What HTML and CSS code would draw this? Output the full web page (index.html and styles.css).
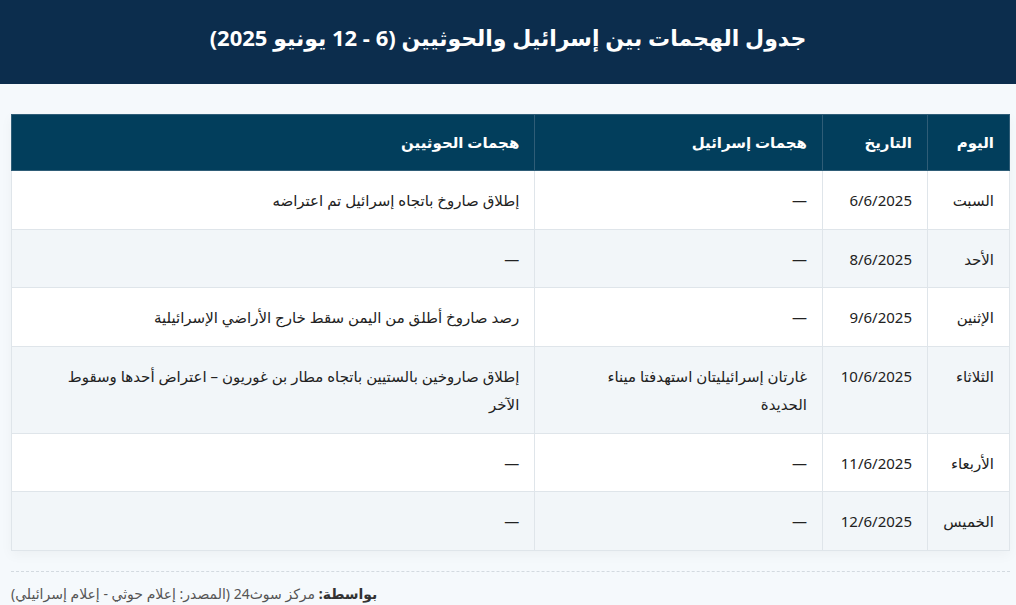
FILE: index.html
```html
<!DOCTYPE html>
<html lang="ar" dir="rtl">
<head>
<meta charset="utf-8">
<link rel="stylesheet" href="styles.css">
</head>
<body>
<header class="top">
  <h1 class="title">جدول الهجمات بين إسرائيل والحوثيين (6 - 12 يونيو 2025)</h1>
</header>
<main class="content">
  <table class="attacks">
    <colgroup>
      <col class="c-day"><col class="c-date"><col class="c-isr"><col class="c-hou">
    </colgroup>
    <thead>
      <tr><th>اليوم</th><th>التاريخ</th><th>هجمات إسرائيل</th><th>هجمات الحوثيين</th></tr>
    </thead>
    <tbody>
      <tr><td>السبت</td><td>6/6/2025</td><td>—</td><td>إطلاق صاروخ باتجاه إسرائيل تم اعتراضه</td></tr>
      <tr><td>الأحد</td><td>8/6/2025</td><td>—</td><td>—</td></tr>
      <tr><td>الإثنين</td><td>9/6/2025</td><td>—</td><td>رصد صاروخ أطلق من اليمن سقط خارج الأراضي الإسرائيلية</td></tr>
      <tr><td>الثلاثاء</td><td>10/6/2025</td><td>غارتان إسرائيليتان استهدفتا ميناء<br>الحديدة</td><td>إطلاق صاروخين بالستيين باتجاه مطار بن غوريون – اعتراض أحدها وسقوط<br>الآخر</td></tr>
      <tr><td>الأربعاء</td><td>11/6/2025</td><td>—</td><td>—</td></tr>
      <tr><td>الخميس</td><td>12/6/2025</td><td>—</td><td>—</td></tr>
    </tbody>
  </table>
  <div class="divider"></div>
  <p class="source"><strong>بواسطة:</strong> مركز سوث24 (المصدر: إعلام حوثي - إعلام إسرائيلي)</p>
</main>
</body>
</html>
```
FILE: styles.css
```css
* { box-sizing: border-box; }
html, body { margin: 0; padding: 0; }
body {
  background: #f5f9fc;
  font-family: "Noto Sans", "DejaVu Sans", sans-serif;
  color: #222;
}
.top {
  background: #0c2d4d;
  height: 84px;
  display: flex;
  justify-content: center;
  padding-top: 21px;
}
.title {
  margin: 0;
  color: #fff;
  font-size: 22px;
  line-height: 32px;
  font-weight: 700;
}
.content {
  padding: 30px 6px 0 11px;
}
.attacks {
  width: 999px;
  border-collapse: collapse;
  background: #fff;
  box-shadow: 0 4px 12px rgba(0,0,0,0.04);
  font-size: 15px;
}
.c-day { width: 82px; }
.c-date { width: 105px; }
.c-isr { width: 288px; }
.c-hou { width: 524px; }
.attacks th {
  background: #023e5c;
  color: #fff;
  font-weight: 700;
  text-align: right;
  padding: 14px 15px;
  line-height: 27px;
  border: 1px solid #2f5d77;
}
.attacks td {
  text-align: right;
  vertical-align: top;
  padding: 15px 15px 14.67px;
  line-height: 28px;
  border: 1px solid #dfe5ea;
  color: #222;
}
.attacks tbody tr:nth-child(even) td { background: #f2f6f9; }
.divider {
  margin-top: 20px;
  border-top: 1px dashed #d3dae0;
  width: 999px;
}
.source {
  margin: 12px 0 0;
  text-align: left;
  font-size: 14px;
  color: #555;
}
.source strong { color: #333; }
```
